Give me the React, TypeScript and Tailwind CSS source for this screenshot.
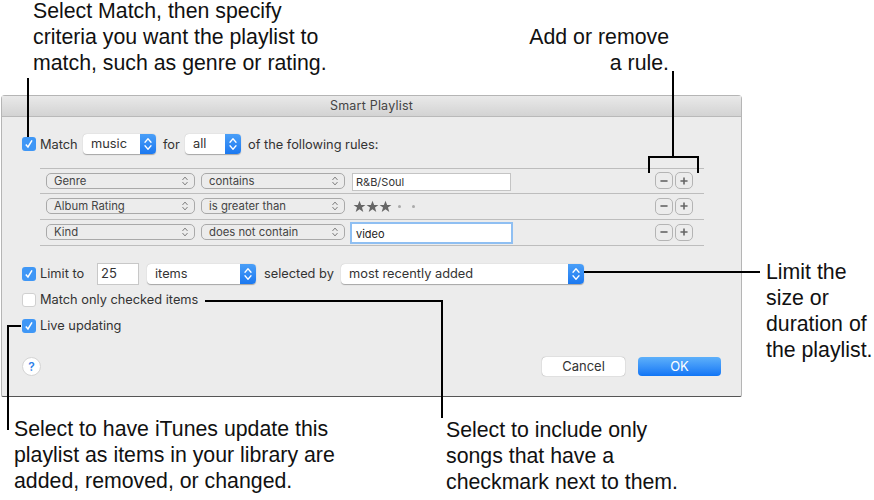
import React from 'react';

const uiFont = "font-['Inter','Noto_Sans',sans-serif]";

const Updown = ({ className }: { className: string }) => (
  <svg viewBox="0 0 10 16" className={className} fill="none" stroke="currentColor" strokeWidth="1.3" strokeLinecap="round" strokeLinejoin="round">
    <path d="M2 6.2 5 2.8 8 6.2" />
    <path d="M2 9.8 5 13.2 8 9.8" />
  </svg>
);

const Check = ({ checked }: { checked: boolean }) =>
  checked ? (
    <span className="flex h-[14px] w-[14px] shrink-0 items-center justify-center rounded-[3px] bg-[#3f97f6] text-white">
      <svg viewBox="0 0 14 14" className="h-[14px] w-[14px]" fill="none" stroke="currentColor" strokeWidth="1.5">
        <path d="M3.8 7.4 6 10 10 3.4" />
      </svg>
    </span>
  ) : (
    <span className="h-[14px] w-[14px] shrink-0 rounded-[3px] border border-[#d0d0d0] bg-white" />
  );

const BlueSelect = ({ label, className }: { label: string; className: string }) => (
  <div className={`flex h-[20px] items-stretch overflow-hidden rounded-[4px] bg-white shadow-[0_0.5px_1px_rgba(0,0,0,0.3)] ${className}`}>
    <span className="flex-1 pl-[8px] text-[12.8px] leading-[20px] text-[#333]">{label}</span>
    <span className="flex w-[16px] items-center justify-center bg-gradient-to-b from-[#4a9ff8] to-[#1a78f0] text-white">
      <Updown className="h-[16px] w-[10px]" />
    </span>
  </div>
);

const RuleSelect = ({ label, className }: { label: string; className: string }) => (
  <div className={`flex h-[16px] items-center justify-between rounded-[5px] border border-[#a9a9a9] pl-[7px] pr-[5px] ${className}`}>
    <span className="text-[11.3px] leading-[14px] text-[#444]">{label}</span>
    <Updown className="h-[12px] w-[8px] text-[#777]" />
  </div>
);

const PlusMinus = () => (
  <div className="ml-[144px] flex gap-[2px]">
    {['M5 9h8', 'M5 9h8M9 5v8'].map(d => (
      <span key={d} className="flex h-[17px] w-[18px] items-center justify-center rounded-[5px] border border-[#b4b4b4] text-[#666]">
        <svg viewBox="0 0 18 18" className="h-[16px] w-[16px]" fill="none" stroke="currentColor" strokeWidth="1.8">
          <path d={d} />
        </svg>
      </span>
    ))}
  </div>
);

const RuleRow = ({ a, b, children, className }: { a: string; b: string; children: React.ReactNode; className: string }) => (
  <div className={`flex items-center border-t border-[#bdbdbd] pl-[6px] pb-[1px] ${className}`}>
    <RuleSelect label={a} className="w-[149px]" />
    <RuleSelect label={b} className="ml-[6px] w-[144px]" />
    <div className="ml-[7px] w-[159px]">{children}</div>
    <PlusMinus />
  </div>
);

const Star = () => (
  <svg viewBox="0 0 24 24" className="h-[13px] w-[13px]" fill="#666">
    <path d="M12 1.5 15 9h8l-6.4 5 2.4 8-7-4.8L5 22l2.4-8L1 9h8z" />
  </svg>
);

const Callout = ({ className, lines }: { className: string; lines: string[] }) => (
  <div className={`absolute font-['Liberation_Sans',Arial,sans-serif] text-[21.3px] leading-[26px] text-[#111] ${className}`}>
    {lines.map(l => (
      <div key={l} className="whitespace-nowrap">{l}</div>
    ))}
  </div>
);

const App: React.FC = () => {
  return (
    <div className="relative h-[500px] w-[874px] overflow-hidden bg-white pl-[1px] pt-[95px]">
      {/* the dialog */}
      <div className={`h-[302px] w-[741px] rounded-t-[4px] rounded-b-[2px] border border-[#b5b5b5] border-b-[#555] bg-[#ececec] ${uiFont}`}>
        <div className="flex h-[21px] items-center justify-center border-b border-[#b9b9b9] bg-gradient-to-b from-[#e9e9e9] to-[#d3d3d3] pt-[1px] text-[12.5px] tracking-[0.2px] text-[#444]">
          Smart Playlist
        </div>

        <div className="pl-[20px] pr-[20px]">
          <div className="mt-[17px] flex h-[20px] items-center text-[12.8px] text-[#333]">
            <Check checked />
            <span className="ml-[4px] w-[37px] pt-[2px]">Match</span>
            <BlueSelect label="music" className="ml-[6px] w-[73px]" />
            <span className="ml-[7px] w-[16px] pt-[2px]">for</span>
            <BlueSelect label="all" className="ml-[6px] w-[56px]" />
            <span className="ml-[7px] pt-[2px]">of the following rules:</span>
          </div>

          <div className="ml-[18px] mt-[14px] w-[664px]">
            <RuleRow a="Genre" b="contains" className="h-[25px]">
              <div className="pt-[2px]">
                <div className="flex h-[18px] items-center border border-[#c4c4c4] bg-white pl-[3px] pt-[2px] text-[11px] text-[#333]">R&amp;B/Soul</div>
              </div>
            </RuleRow>
            <RuleRow a="Album Rating" b="is greater than" className="h-[26px]">
              <div className="flex items-center">
                <div className="ml-[1px] flex w-[45px]">
                  <Star />
                  <Star />
                  <Star />
                </div>
                <span className="h-[3px] w-[3px] rounded-full bg-[#aaa]" />
                <span className="ml-[11px] h-[3px] w-[3px] rounded-full bg-[#aaa]" />
              </div>
            </RuleRow>
            <RuleRow a="Kind" b="does not contain" className="h-[27px] border-b">
              <div className="pt-[2px]">
                <div className="flex h-[18px] items-center bg-white pl-[4px] pt-[2px] text-[11px] text-[#222] shadow-[0_0_0_2px_#8fbff2]">video</div>
              </div>
            </RuleRow>
          </div>

          <div className="mt-[17px] flex h-[22px] items-center text-[12.8px] text-[#333]">
            <Check checked />
            <span className="ml-[4px] w-[45px] whitespace-nowrap">Limit to</span>
            <div className="ml-[12px] flex h-[22px] w-[42px] items-center border border-[#c8c8c8] bg-white pl-[3px] text-[13px]">25</div>
            <BlueSelect label="items" className="ml-[8px] w-[109px]" />
            <span className="ml-[8px] w-[69px] whitespace-nowrap">selected by</span>
            <BlueSelect label="most recently added" className="ml-[8px] w-[243px]" />
          </div>

          <div className="mt-[8px] flex h-[14px] items-center text-[12.8px] text-[#333]">
            <Check checked={false} />
            <span className="ml-[4px]">Match only checked items</span>
          </div>
          <div className="mt-[12px] flex h-[14px] items-center text-[12.8px] text-[#333]">
            <Check checked />
            <span className="ml-[4px]">Live updating</span>
          </div>

          <div className="mt-[24px] flex items-center justify-between">
            <span className="flex h-[19px] w-[19px] items-center justify-center rounded-full border border-[#d4d4d4] bg-white text-[12px] font-semibold text-[#2f7fe8]">?</span>
            <div className="flex gap-[13px]">
              <button className="h-[19px] w-[83px] rounded-[4px] bg-white text-[13px] leading-[19px] text-[#333] shadow-[0_0_1px_rgba(0,0,0,0.5)]">Cancel</button>
              <button className="h-[19px] w-[83px] rounded-[4px] bg-gradient-to-b from-[#5db0fa] to-[#0f75f5] text-[13px] leading-[19px] text-white">OK</button>
            </div>
          </div>
        </div>
      </div>

      {/* leader lines */}
      <svg className="absolute left-0 top-0 h-[500px] w-[874px]" viewBox="0 0 874 500" fill="none" stroke="#000" strokeWidth="2">
        <path d="M28 78V137" />
        <path d="M673 71V157M649 173V157H698V173" />
        <path d="M584 272H760" />
        <path d="M205 301H442V418" />
        <path d="M21 326H8V430" />
      </svg>

      <Callout className="left-[33px] top-[-2px]" lines={['Select Match, then specify', 'criteria you want the playlist to', 'match, such as genre or rating.']} />
      <Callout className="right-[205px] top-[24px] text-right" lines={['Add or remove', 'a rule.']} />
      <Callout className="left-[766px] top-[259px]" lines={['Limit the', 'size or', 'duration of', 'the playlist.']} />
      <Callout className="left-[14px] top-[416px]" lines={['Select to have iTunes update this', 'playlist as items in your library are', 'added, removed, or changed.']} />
      <Callout className="left-[446px] top-[417px]" lines={['Select to include only', 'songs that have a', 'checkmark next to them.']} />
    </div>
  );
};

export default App;
